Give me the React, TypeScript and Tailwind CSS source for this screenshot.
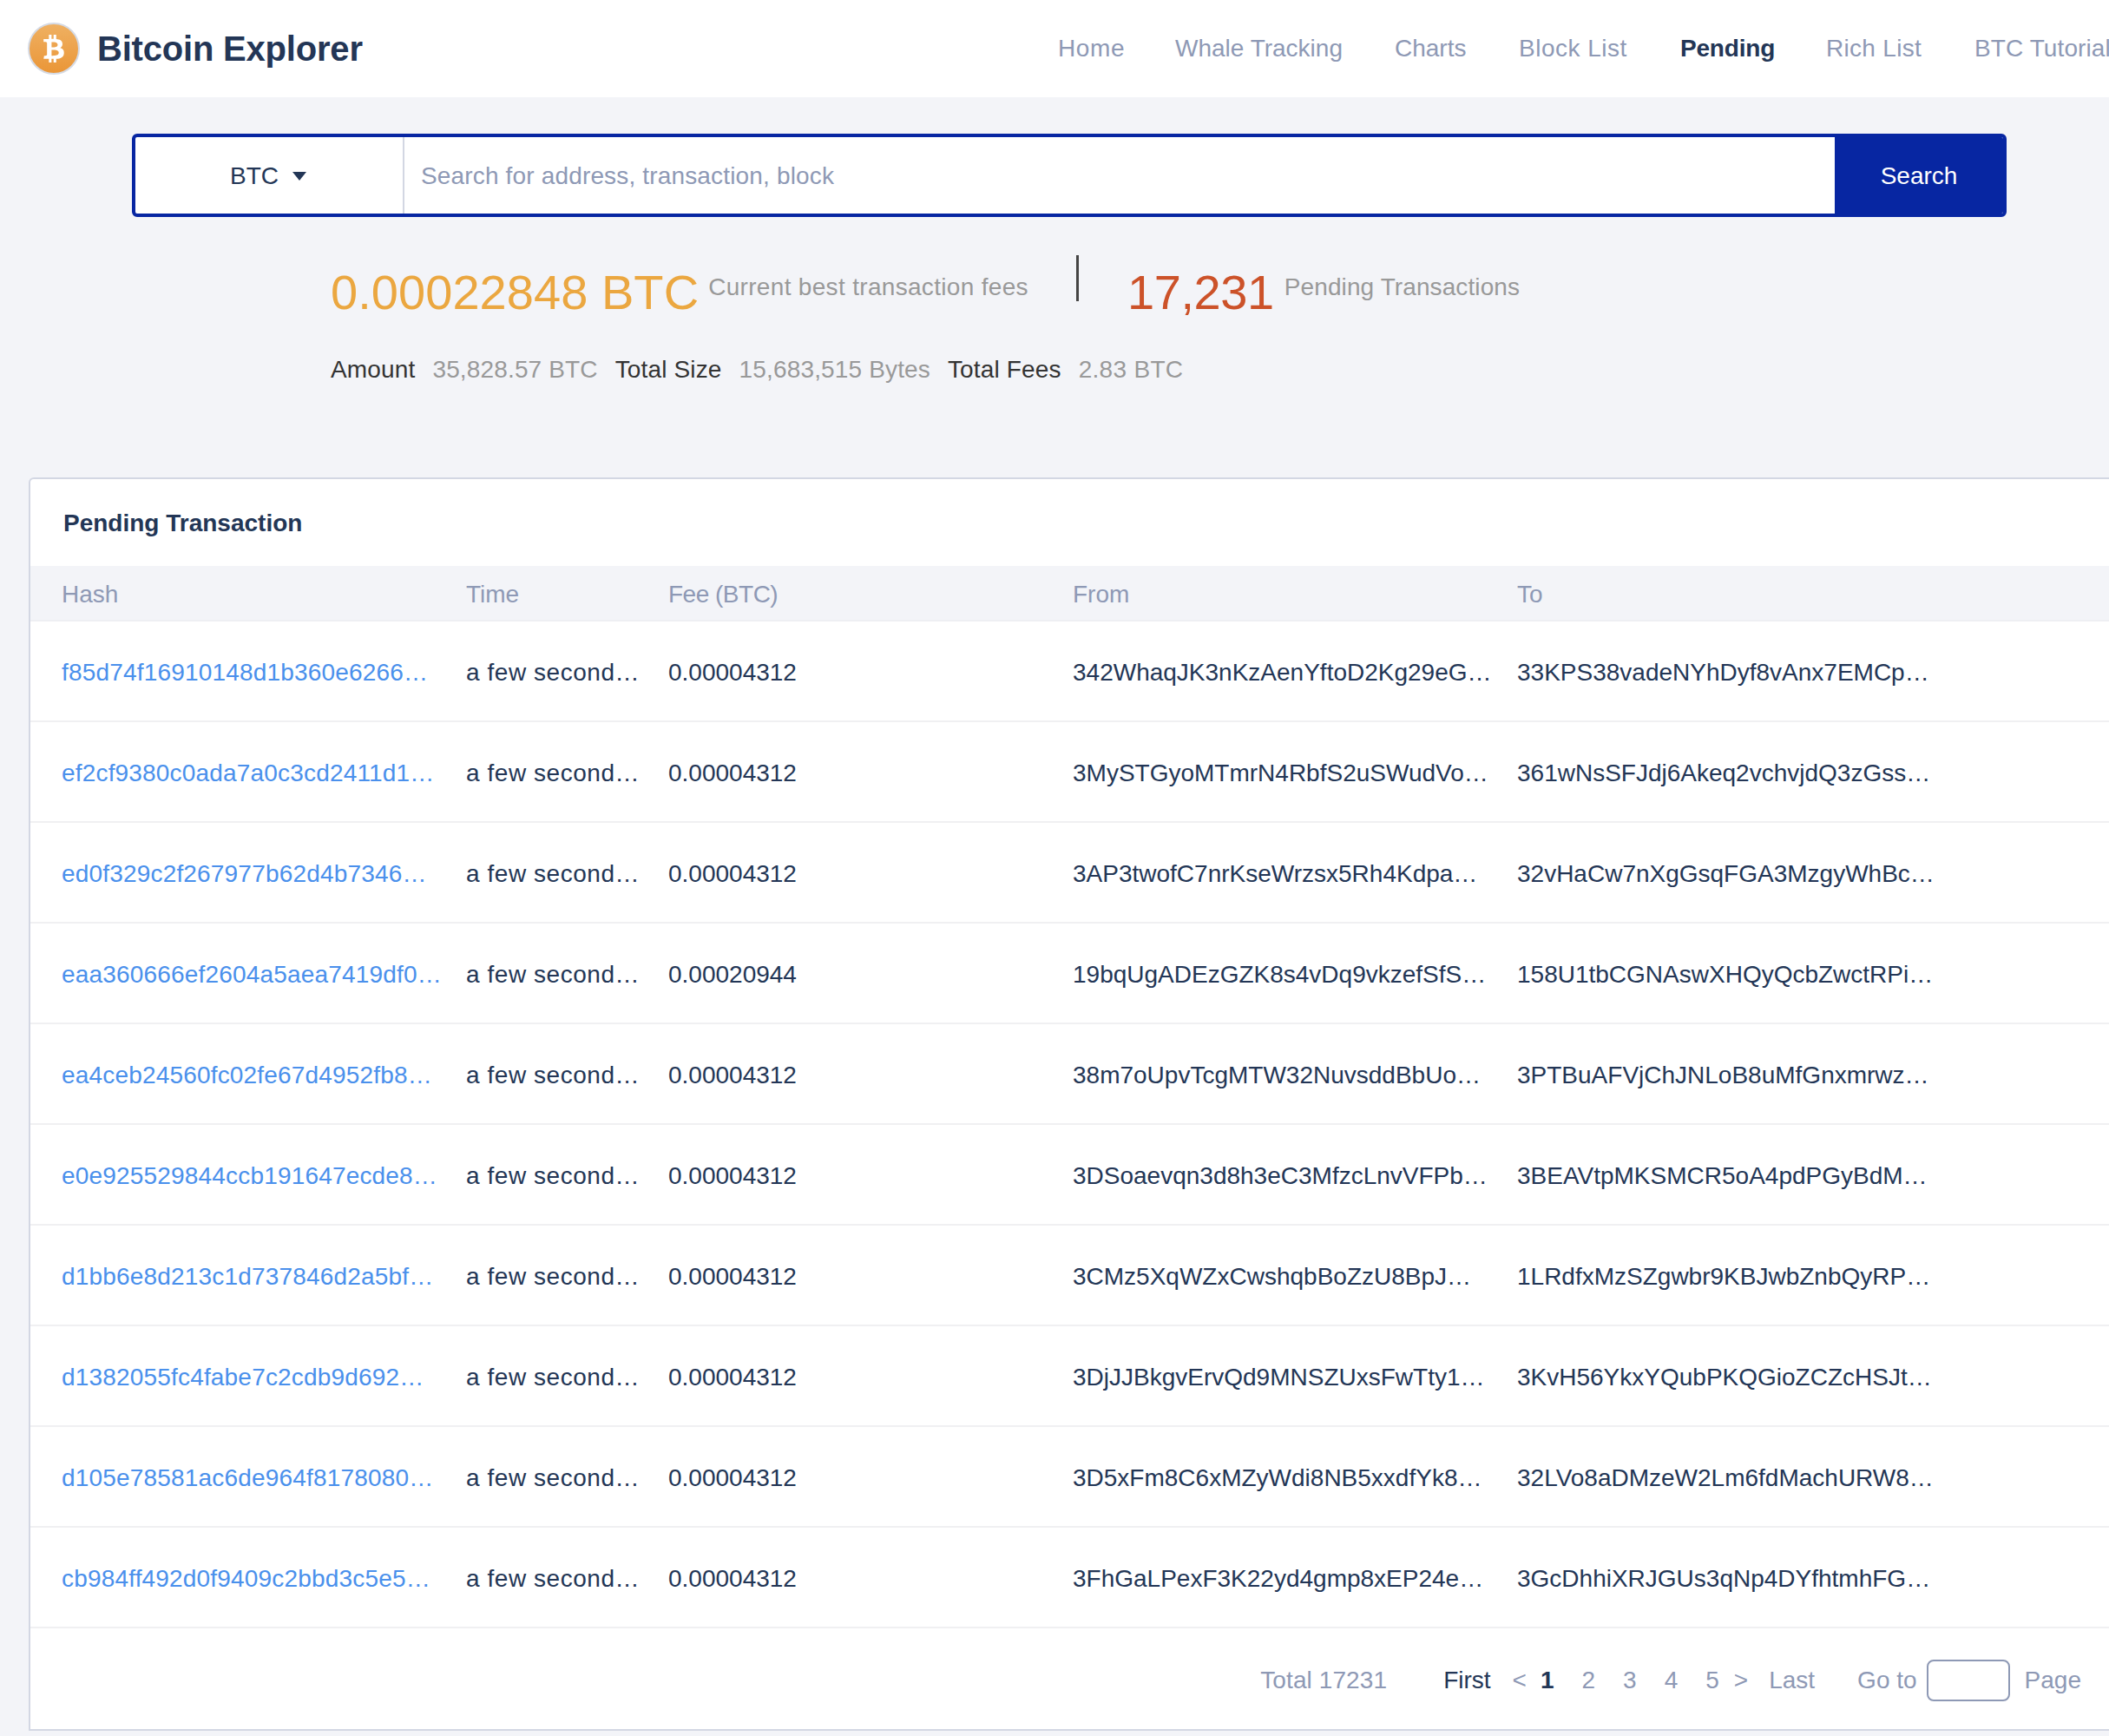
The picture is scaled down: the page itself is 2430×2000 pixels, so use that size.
import { FaBtc } from "react-icons/fa";

const F = { fontFamily: '"Liberation Sans", Arial, sans-serif' };

const nav = [
  { t: "Home", c: "w-[135px] tracking-[0.6px] text-[#8e99b5]" },
  { t: "Whale Tracking", c: "w-[253px] text-[#8e99b5]" },
  { t: "Charts", c: "w-[143px] text-[#8e99b5]" },
  { t: "Block List", c: "w-[186px] tracking-[0.5px] text-[#8e99b5]" },
  { t: "Pending", c: "w-[168px] tracking-[-0.2px] font-bold text-[#233656]" },
  { t: "Rich List", c: "w-[171px] tracking-[0.3px] text-[#8e99b5]" },
  { t: "BTC Tutorial", c: "w-[158px] tracking-[0.1px] text-[#8e99b5]" },
];

const rows = [
  ["f85d74f16910148d1b360e6266…", "0.00004312", "342WhaqJK3nKzAenYftoD2Kg29eG…", "33KPS38vadeNYhDyf8vAnx7EMCp…"],
  ["ef2cf9380c0ada7a0c3cd2411d1…", "0.00004312", "3MySTGyoMTmrN4RbfS2uSWudVo…", "361wNsSFJdj6Akeq2vchvjdQ3zGss…"],
  ["ed0f329c2f267977b62d4b7346…", "0.00004312", "3AP3twofC7nrKseWrzsx5Rh4Kdpa…", "32vHaCw7nXgGsqFGA3MzgyWhBc…"],
  ["eaa360666ef2604a5aea7419df0…", "0.00020944", "19bqUgADEzGZK8s4vDq9vkzefSfS…", "158U1tbCGNAswXHQyQcbZwctRPi…"],
  ["ea4ceb24560fc02fe67d4952fb8…", "0.00004312", "38m7oUpvTcgMTW32NuvsddBbUo…", "3PTBuAFVjChJNLoB8uMfGnxmrwz…"],
  ["e0e925529844ccb191647ecde8…", "0.00004312", "3DSoaevqn3d8h3eC3MfzcLnvVFPb…", "3BEAVtpMKSMCR5oA4pdPGyBdM…"],
  ["d1bb6e8d213c1d737846d2a5bf…", "0.00004312", "3CMz5XqWZxCwshqbBoZzU8BpJ…", "1LRdfxMzSZgwbr9KBJwbZnbQyRP…"],
  ["d1382055fc4fabe7c2cdb9d692…", "0.00004312", "3DjJJBkgvErvQd9MNSZUxsFwTty1…", "3KvH56YkxYQubPKQGioZCZcHSJt…"],
  ["d105e78581ac6de964f8178080…", "0.00004312", "3D5xFm8C6xMZyWdi8NB5xxdfYk8…", "32LVo8aDMzeW2Lm6fdMachURW8…"],
  ["cb984ff492d0f9409c2bbd3c5e5…", "0.00004312", "3FhGaLPexF3K22yd4gmp8xEP24e…", "3GcDhhiXRJGUs3qNp4DYfhtmhFG…"],
];

function Logo() {
  return (
    <div className="flex h-[60px] w-[60px] shrink-0 items-center justify-center rounded-full border-2 border-[#d5dae4] bg-gradient-to-b from-[#efb061] to-[#ea9636]">
      <FaBtc size={32} color="#ffffff" />
    </div>
  );
}

export default function App() {
  return (
    <div className="h-[2000px] w-[2430px] overflow-hidden bg-[#f3f4f8] text-[28px]" style={F}>
      <header className="flex h-[112px] w-[2433px] items-center bg-white pl-[32px]">
        <Logo />
        <span className="ml-[20px] text-[40px] font-bold tracking-[-0.2px] text-[#233656]">Bitcoin Explorer</span>
        <nav className="ml-auto flex whitespace-nowrap">
          {nav.map((n) => (
            <span key={n.t} className={n.c}>
              {n.t}
            </span>
          ))}
        </nav>
      </header>

      <div className="ml-[152px] mt-[42px] flex h-[96px] w-[2160px] overflow-hidden rounded-[6px] border-4 border-[#0726a2] bg-white">
        <div className="flex w-[310px] items-center justify-center gap-[16px] border-r-2 border-[#d3d7e3] pt-[1px] pr-[2px] text-[#233656]">
          BTC
          <span className="h-0 w-0 border-x-[8px] border-t-[10px] border-x-transparent border-t-[#233656]" />
        </div>
        <div className="flex-1 pl-[19px] leading-[89px] tracking-[0.16px] text-[#8e99b5]">
          Search for address, transaction, block
        </div>
        <div className="flex w-[194px] items-center justify-center bg-[#0726a2] pt-[1px] text-white">Search</div>
      </div>

      <div className="ml-[381px] mt-[44px] flex h-[53px] items-start">
        <span className="mt-[11px] text-[56px] leading-[64px] tracking-[0.05px] text-[#eba740]">0.00022848 BTC</span>
        <span className="ml-[11px] mt-[21px] leading-[32px] tracking-[0.32px] text-[#999999]">
          Current best transaction fees
        </span>
        <span className="ml-[55px] h-[53px] w-[3px] bg-[#444444]" />
        <span className="ml-[56px] mt-[11px] text-[56px] leading-[64px] tracking-[-0.4px] text-[#cc5229]">17,231</span>
        <span className="ml-[12px] mt-[21px] leading-[32px] tracking-[0.1px] text-[#999999]">Pending Transactions</span>
      </div>

      <div className="ml-[381px] mt-[63px] flex leading-[32px] tracking-[0.15px]">
        <span className="text-[#333333]">Amount</span>
        <span className="ml-[20px] text-[#999999]">35,828.57 BTC</span>
        <span className="ml-[20px] text-[#333333]">Total Size</span>
        <span className="ml-[20px] text-[#999999]">15,683,515 Bytes</span>
        <span className="ml-[20px] text-[#333333]">Total Fees</span>
        <span className="ml-[20px] tracking-[0.3px] text-[#999999]">2.83 BTC</span>
      </div>

      <section className="ml-[33px] mt-[108px] w-[2500px] rounded-tl-[6px] border-b-2 border-l-2 border-t-2 border-[#d3d7e3] bg-white">
        <div className="flex h-[100px] items-center pl-[38px] pt-[2px] font-bold text-[#233656]">Pending Transaction</div>
        <div className="grid h-[64px] grid-cols-[466px_233px_466px_512px_1fr] items-center border-b-2 border-[#eeeff3] bg-[#f3f4f8] pl-[36px] pt-[3px] text-[#8e99b5]">
          <span>Hash</span>
          <span>Time</span>
          <span className="tracking-[-0.5px]">Fee (BTC)</span>
          <span>From</span>
          <span>To</span>
        </div>
        {rows.map((r) => (
          <div
            key={r[0]}
            className="grid h-[116px] grid-cols-[466px_233px_466px_512px_1fr] items-center border-b-2 border-[#f0f0f2] pl-[36px] pt-[3px] text-[#233656]"
          >
            <span className="tracking-[0.18px] text-[#4a90ec]">{r[0]}</span>
            <span className="tracking-[0.55px]">a few second…</span>
            <span>{r[1]}</span>
            <span>{r[2]}</span>
            <span>{r[3]}</span>
          </div>
        ))}
        <div className="flex h-[116px] w-[2363px] items-center justify-end pt-[3px] text-[#8e99b5]">
          <span className="tracking-[0.1px]">Total 17231</span>
          <span className="ml-[65px] text-[#233656]">First</span>
          <span className="ml-[25px]">&lt;</span>
          <span className="ml-[16px] font-bold text-[#233656]">1</span>
          <span className="ml-[32px]">2</span>
          <span className="ml-[32px]">3</span>
          <span className="ml-[32px]">4</span>
          <span className="ml-[32px]">5</span>
          <span className="ml-[17px]">&gt;</span>
          <span className="ml-[24px]">Last</span>
          <span className="ml-[49px]">Go to</span>
          <span className="ml-[11px] h-[48px] w-[96px] rounded-[8px] border-2 border-[#8e99b5]" />
          <span className="ml-[17px]">Page</span>
        </div>
      </section>
    </div>
  );
}
